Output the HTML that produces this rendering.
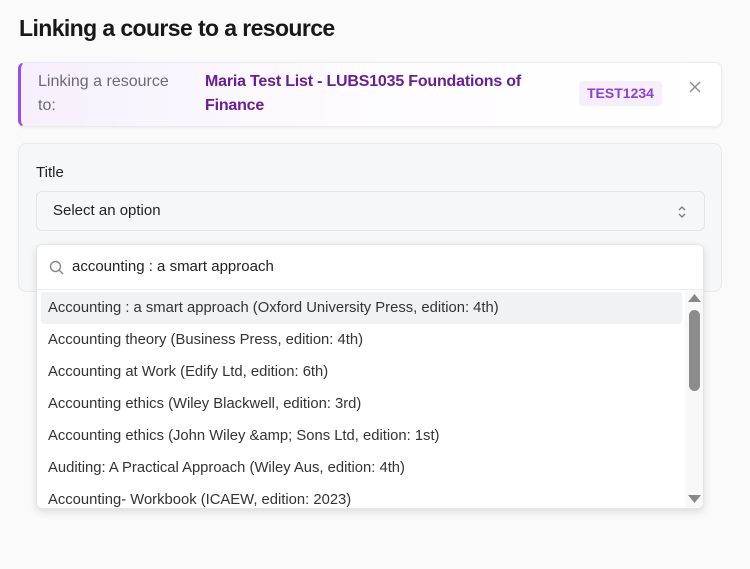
<!DOCTYPE html>
<html><head><style>
*{box-sizing:border-box;margin:0;padding:0}
body{width:750px;height:569px;background:#fafafa;font-family:"Liberation Sans",sans-serif;position:relative;overflow:hidden;color:#1f2328}
h1{position:absolute;left:19px;top:15px;font-size:23px;font-weight:bold;letter-spacing:-0.6px;color:#18181b}
.banner{position:absolute;left:18px;top:62px;width:704px;height:65px;border-radius:7px;border:1px solid #ececf0;border-left:3px solid #9b4fe0;background:linear-gradient(90deg,#f7effc 0%,#fdfbff 45%,#fff 100%);box-shadow:0 1px 3px rgba(0,0,0,.06)}
.b1{position:absolute;left:17px;top:7px;font-size:16px;line-height:24px;color:#6b6b72;width:150px}
.b2{position:absolute;left:184px;top:7px;font-size:16px;line-height:24px;color:#6a1f8e;font-weight:bold;width:360px;letter-spacing:-0.2px}
.tag{position:absolute;left:558px;top:18px;height:25px;padding:0 8px;background:#f6eefc;border-radius:4px;color:#9040d0;font-weight:bold;font-size:14px;line-height:25px}
.x{position:absolute;left:668px;top:18px}
.card{position:absolute;left:18px;top:143px;width:704px;height:149px;border-radius:8px;background:#f6f7f8;border:1px solid #e8e9ec}
.lbl{position:absolute;left:36px;top:164px;font-size:15px;color:#222}
.sel{position:absolute;left:36px;top:191px;width:669px;height:40px;border:1px solid #e4e5e8;border-radius:6px;background:#f6f7f8;font-size:15px;line-height:38px;padding-left:16px;color:#222}
.dd{position:absolute;left:36px;top:244px;width:668px;height:265px;background:#fff;border:1px solid #e3e4e7;border-radius:6px;box-shadow:0 3px 8px rgba(0,0,0,.12);overflow:hidden}
.search{height:45px;border-bottom:1px solid #ececee;font-size:15px;line-height:44px;padding-left:35px;position:relative;color:#222}
.it{position:absolute;left:4px;width:641px;height:32px;font-size:14.8px;line-height:32px;padding-left:7px;color:#333}
.hl{background:#f1f2f4;border-radius:3px}
.sb{position:absolute;left:648px;top:45px;width:19px;height:220px;background:#f8f8f8}
</style></head><body>
<h1>Linking a course to a resource</h1>
<div class="banner">
<div class="b1">Linking a resource to:</div>
<div class="b2">Maria Test List - LUBS1035 Foundations of Finance</div>
<div class="tag">TEST1234</div>
<svg class="x" width="12" height="12" viewBox="0 0 12 12"><path d="M1 1l10 10M11 1L1 11" stroke="#8a8a92" stroke-width="1.3"/></svg>
</div>
<div class="card"></div>
<div class="lbl">Title</div>
<div class="sel">Select an option
<svg style="position:absolute;right:17px;top:13px" width="10" height="14" viewBox="0 0 10 14"><path d="M2 5l3-3 3 3M2 9l3 3 3-3" fill="none" stroke="#777" stroke-width="1.3"/></svg></div>
<div class="dd">
<div class="search"><svg style="position:absolute;left:12px;top:15px" width="15" height="15" viewBox="0 0 15 15"><circle cx="6.5" cy="6.5" r="5" fill="none" stroke="#888" stroke-width="1.4"/><path d="M10.3 10.3L14 14" stroke="#888" stroke-width="1.4"/></svg>accounting : a smart approach</div>
<div class="it hl" style="top:47px">Accounting : a smart approach (Oxford University Press, edition: 4th)</div>
<div class="it" style="top:79px">Accounting theory (Business Press, edition: 4th)</div>
<div class="it" style="top:111px">Accounting at Work (Edify Ltd, edition: 6th)</div>
<div class="it" style="top:143px">Accounting ethics (Wiley Blackwell, edition: 3rd)</div>
<div class="it" style="top:175px">Accounting ethics (John Wiley &amp;amp; Sons Ltd, edition: 1st)</div>
<div class="it" style="top:207px">Auditing: A Practical Approach (Wiley Aus, edition: 4th)</div>
<div class="it" style="top:239px">Accounting- Workbook (ICAEW, edition: 2023)</div>
<div class="sb">
<svg style="position:absolute;left:3px;top:3px" width="13" height="9"><path d="M0 9L6.5 1 13 9z" fill="#888"/></svg>
<div style="position:absolute;left:4px;top:20px;width:11px;height:81px;border-radius:6px;background:#8c8c8c"></div>
<svg style="position:absolute;left:3px;top:205px" width="13" height="9"><path d="M0 0L6.5 8 13 0z" fill="#888"/></svg>
</div>
</div>
</body></html>
